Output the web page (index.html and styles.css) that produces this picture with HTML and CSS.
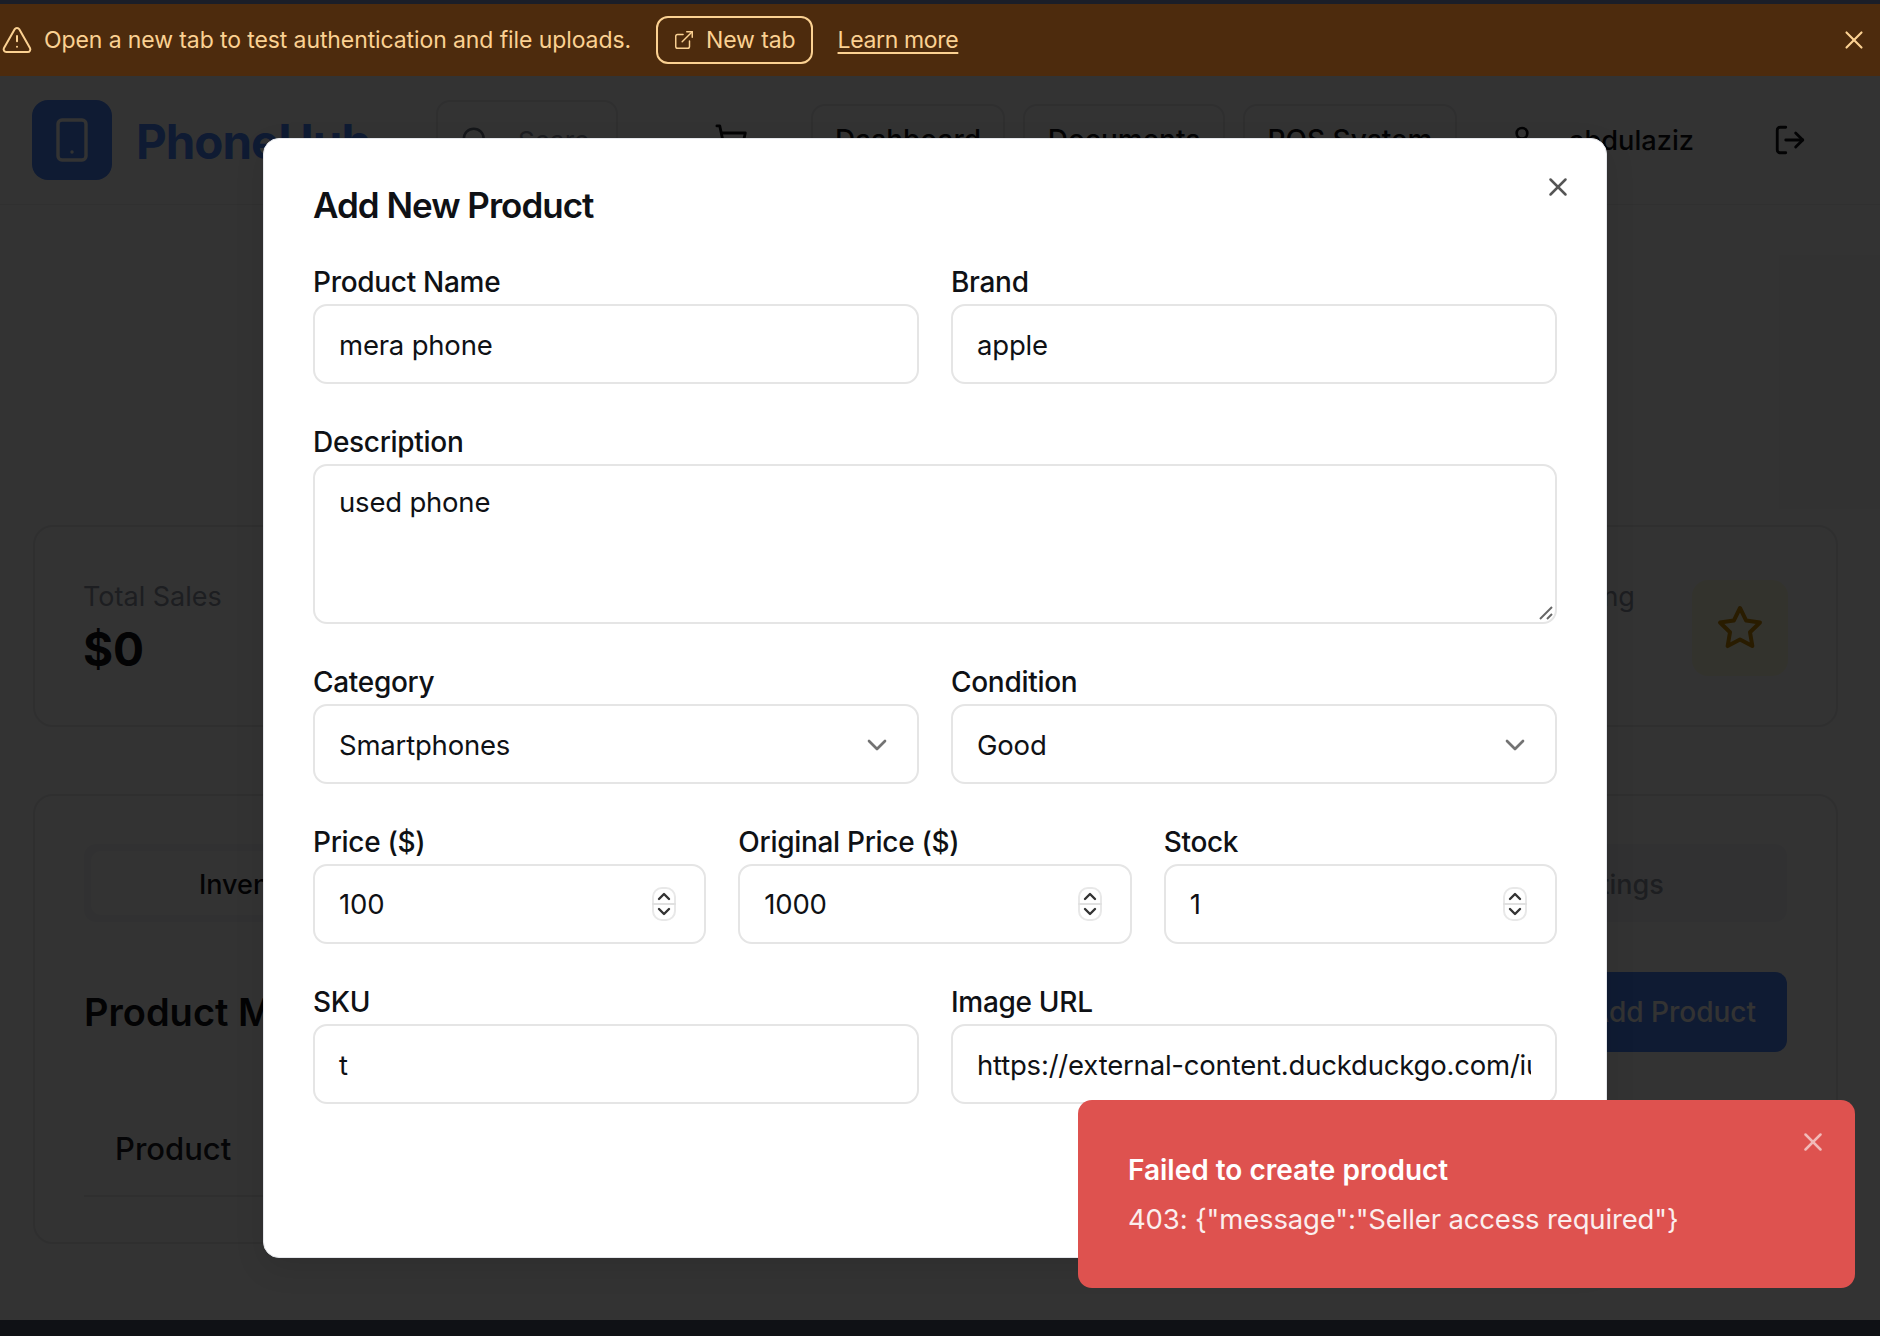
FILE: index.html
```html
<!DOCTYPE html>
<html lang="en">
<head>
    <meta charset="UTF-8">
    <meta name="viewport" content="width=device-width, initial-scale=1.0">
    <title>PhoneHub - Seller Dashboard</title>
    <link rel="stylesheet" href="styles.css">
</head>
<body>
    <div class="top-strip"></div>

    <div class="banner">
        <svg class="icon banner-warn" viewBox="0 0 24 24"><path d="m21.73 18-8-14a2 2 0 0 0-3.48 0l-8 14A2 2 0 0 0 4 21h16a2 2 0 0 0 1.73-3"/><path d="M12 9v4"/><path d="M12 17h.01"/></svg>
        <span class="banner-text">Open a new tab to test authentication and file uploads.</span>
        <a class="banner-btn">
            <svg class="icon banner-btn-icon" viewBox="0 0 24 24"><path d="M15 3h6v6"/><path d="M10 14 21 3"/><path d="M18 13v6a2 2 0 0 1-2 2H5a2 2 0 0 1-2-2V8a2 2 0 0 1 2-2h6"/></svg>
            New tab
        </a>
        <a class="banner-link">Learn more</a>
        <svg class="icon banner-close" viewBox="0 0 24 24"><path d="M18 6 6 18"/><path d="m6 6 12 12"/></svg>
    </div>

    <div class="app">
        <header class="header">
            <div class="logo">
                <svg class="icon logo-icon" viewBox="0 0 24 24"><rect width="14" height="20" x="5" y="2" rx="2"/><path d="M12 18h.01"/></svg>
            </div>
            <span class="brand">PhoneHub</span>
            <div class="search">
                <svg class="icon search-icon" viewBox="0 0 24 24"><circle cx="11" cy="11" r="8"/><path d="m21 21-4.3-4.3"/></svg>
                <span class="search-text">Search phones</span>
            </div>
            <svg class="icon cart-icon" viewBox="0 0 24 24"><circle cx="8" cy="21" r="1"/><circle cx="19" cy="21" r="1"/><path d="M2.05 2.05h2l2.66 12.42a2 2 0 0 0 2 1.58h9.78a2 2 0 0 0 1.95-1.57l1.65-7.43H5.12"/></svg>
            <nav class="nav">
                <a class="nav-btn nav-dashboard">Dashboard</a>
                <a class="nav-btn nav-documents">Documents</a>
                <a class="nav-btn nav-pos">POS System</a>
            </nav>
            <svg class="icon user-icon" viewBox="0 0 24 24"><path d="M19 21v-2a4 4 0 0 0-4-4H9a4 4 0 0 0-4 4v2"/><circle cx="12" cy="7" r="4"/></svg>
            <span class="username">abdulaziz</span>
            <svg class="icon logout-icon" viewBox="0 0 24 24"><path d="M9 21H5a2 2 0 0 1-2-2V5a2 2 0 0 1 2-2h4"/><path d="m16 17 5-5-5-5"/><path d="M21 12H9"/></svg>
        </header>

        <main class="content">
            <section class="stats">
                <div class="card stat">
                    <div>
                        <div class="stat-label">Total Sales</div>
                        <div class="stat-value">$0</div>
                    </div>
                </div>
                <div class="card stat"></div>
                <div class="card stat"></div>
                <div class="card stat">
                    <div>
                        <div class="stat-label">Sellers Rating</div>
                        <div class="stat-value">0</div>
                    </div>
                    <div class="stat-icon">
                        <svg class="icon star-icon" viewBox="0 0 24 24"><path d="M12 2l3.09 6.26L22 9.27l-5 4.87 1.18 6.88L12 17.77l-6.18 3.25L7 14.14 2 9.27l6.91-1.01L12 2z"/></svg>
                    </div>
                </div>
            </section>

            <section class="card panel">
                <div class="tabs">
                    <div class="tab tab-active">Inventory</div>
                    <div class="tab">Orders</div>
                    <div class="tab">Analytics</div>
                    <div class="tab">Reviews</div>
                    <div class="tab">Settings</div>
                </div>
                <div class="panel-head">
                    <h2>Product Management</h2>
                    <a class="primary-btn">Add Product</a>
                </div>
                <div class="table-head">Product</div>
            </section>
        </main>

        <div class="overlay">
            <div class="modal">
                <svg class="icon modal-close" viewBox="0 0 24 24"><path d="M18 6 6 18"/><path d="m6 6 12 12"/></svg>
                <h1>Add New Product</h1>
                <div class="form">
                    <div class="row row-2">
                        <div class="group">
                            <label>Product Name</label>
                            <div class="field">mera phone</div>
                        </div>
                        <div class="group">
                            <label>Brand</label>
                            <div class="field">apple</div>
                        </div>
                    </div>
                    <div class="group">
                        <label>Description</label>
                        <div class="field field-area">
                            used phone
                            <svg class="grip" viewBox="0 0 16 16"><path d="M2 14 14 2"/><path d="M9 14l5-5"/></svg>
                        </div>
                    </div>
                    <div class="row row-2">
                        <div class="group">
                            <label>Category</label>
                            <div class="field field-select">
                                Smartphones
                                <svg class="icon chevron" viewBox="0 0 24 24"><path d="m6 9 6 6 6-6"/></svg>
                            </div>
                        </div>
                        <div class="group">
                            <label>Condition</label>
                            <div class="field field-select">
                                Good
                                <svg class="icon chevron" viewBox="0 0 24 24"><path d="m6 9 6 6 6-6"/></svg>
                            </div>
                        </div>
                    </div>
                    <div class="row row-3">
                        <div class="group">
                            <label>Price ($)</label>
                            <div class="field field-number">
                                100
                                <svg class="spinner" viewBox="0 0 24 34"><rect x="1" y="1" width="22" height="32" rx="9"/><path class="spinner-line" d="M1 17h22"/><path d="m7 12 5-5 5 5"/><path d="m7 22 5 5 5-5"/></svg>
                            </div>
                        </div>
                        <div class="group">
                            <label>Original Price ($)</label>
                            <div class="field field-number">
                                1000
                                <svg class="spinner" viewBox="0 0 24 34"><rect x="1" y="1" width="22" height="32" rx="9"/><path class="spinner-line" d="M1 17h22"/><path d="m7 12 5-5 5 5"/><path d="m7 22 5 5 5-5"/></svg>
                            </div>
                        </div>
                        <div class="group">
                            <label>Stock</label>
                            <div class="field field-number">
                                1
                                <svg class="spinner" viewBox="0 0 24 34"><rect x="1" y="1" width="22" height="32" rx="9"/><path class="spinner-line" d="M1 17h22"/><path d="m7 12 5-5 5 5"/><path d="m7 22 5 5 5-5"/></svg>
                            </div>
                        </div>
                    </div>
                    <div class="row row-2">
                        <div class="group">
                            <label>SKU</label>
                            <div class="field">t</div>
                        </div>
                        <div class="group">
                            <label>Image URL</label>
                            <div class="field"><span class="field-clip">https://external-content.duckduckgo.com/iu/?u=https%3A%2F%2Ftse1.mm.bing.net</span></div>
                        </div>
                    </div>
                </div>
            </div>
        </div>

        <div class="toast">
            <svg class="icon toast-close" viewBox="0 0 24 24"><path d="M18 6 6 18"/><path d="m6 6 12 12"/></svg>
            <div class="toast-title">Failed to create product</div>
            <div class="toast-msg">403: {"message":"Seller access required"}</div>
        </div>
    </div>

    <div class="bottom-strip"></div>
</body>
</html>
```

FILE: styles.css
```css
* {
    box-sizing: border-box;
}
html, body {
    height: 100%;
}
body {
    margin: 0;
    height: 1336px;
    overflow: hidden;
    display: flex;
    flex-direction: column;
    font-family: Inter, "Liberation Sans", sans-serif;
    color: #0f1115;
    background-color: #0f1115;
}
h1, h2 {
    margin: 0;
}
.icon {
    fill: none;
    stroke: currentColor;
    stroke-width: 2;
    stroke-linecap: round;
    stroke-linejoin: round;
    flex-shrink: 0;
}

/* strips around the page */
.top-strip {
    height: 4px;
    background-color: #1b1e28;
}
.bottom-strip {
    height: 16px;
    background-color: #0f1115;
}

/* banner */
.banner {
    height: 72px;
    display: flex;
    align-items: center;
    padding: 0 11px 0 1px;
    background-color: #4d2b0d;
    color: #fbd192;
    font-size: 23px;
    letter-spacing: -0.1px;
}
.banner-warn {
    width: 32px;
    height: 32px;
    stroke-width: 1.5;
}
.banner-text {
    margin-left: 11px;
}
.banner-btn {
    display: flex;
    align-items: center;
    gap: 11px;
    height: 48px;
    margin-left: 25px;
    padding: 0 15px;
    border: 2px solid #fbd192;
    border-radius: 12px;
}
.banner-btn-icon {
    width: 22px;
    height: 22px;
    stroke-width: 1.6;
}
.banner-link {
    margin-left: 25px;
    letter-spacing: -0.35px;
    text-decoration: underline;
    text-underline-offset: 4px;
}
.banner-close {
    width: 30px;
    height: 30px;
    margin-left: auto;
    stroke-width: 1.7;
}

/* dashboard behind the dialog */
.app {
    position: relative;
    flex: 1;
    background-color: #fcfcfc;
}
.header {
    height: 129px;
    display: flex;
    align-items: center;
    padding: 0 33px 0 32px;
    border-bottom: 1px solid #eeeff1;
    background-color: #fff;
}
.logo {
    width: 80px;
    height: 80px;
    display: flex;
    align-items: center;
    justify-content: center;
    border-radius: 16px;
    background-color: #4a85ff;
    color: #fff;
}
.logo-icon {
    width: 48px;
    height: 48px;
    stroke-width: 1.7;
}
.brand {
    width: 300px;
    margin-left: 24px;
    padding-top: 3px;
    font-size: 47.5px;
    font-weight: 700;
    letter-spacing: -1px;
    color: #4a85ff;
}
.search {
    width: 182px;
    height: 80px;
    display: flex;
    align-items: center;
    gap: 28px;
    padding: 0 26px 0 22px;
    border: 2px solid #e8e9ec;
    border-radius: 14px;
    font-size: 26px;
    color: #8b93a1;
}
.search-icon {
    width: 30px;
    height: 30px;
    color: #6b7280;
}
.search-text {
    min-width: 0;
    overflow: hidden;
    white-space: nowrap;
}
.cart-icon {
    width: 34px;
    height: 34px;
    margin-left: 96px;
}
.nav {
    display: flex;
    gap: 18px;
    margin-left: 63px;
}
.nav-btn {
    height: 72px;
    display: flex;
    align-items: center;
    justify-content: center;
    border: 2px solid #e8e9ec;
    border-radius: 14px;
    font-size: 28px;
    font-weight: 500;
}
.nav-dashboard {
    width: 194px;
}
.nav-documents {
    width: 202px;
}
.nav-pos {
    width: 214px;
}
.user-icon {
    width: 32px;
    height: 32px;
    margin-left: 49px;
}
.username {
    width: 204px;
    margin-left: 31px;
    font-size: 27.2px;
    font-weight: 500;
}
.logout-icon {
    width: 34px;
    height: 34px;
}
.content {
    padding: 320px 42px 0 33px;
}
.card {
    border: 2px solid #e8e9ec;
    border-radius: 20px;
    background-color: #fff;
}
.stats {
    display: grid;
    grid-template-columns: repeat(4, 1fr);
    gap: 32px;
}
.stat {
    height: 202px;
    display: flex;
    align-items: center;
    justify-content: space-between;
    padding: 4px 48px 0;
}
.stat-label {
    font-size: 27px;
    color: #8f97a6;
}
.stat-value {
    margin-top: 8px;
    font-size: 46px;
    font-weight: 700;
}
.stat-icon {
    width: 96px;
    height: 96px;
    display: flex;
    align-items: center;
    justify-content: center;
    border-radius: 16px;
    background-color: #fefce0;
    color: #ca8a04;
}
.star-icon {
    width: 48px;
    height: 48px;
}
.panel {
    height: 450px;
    margin-top: 67px;
    padding: 48px 49px 0;
}
.tabs {
    display: grid;
    grid-template-columns: repeat(5, 1fr);
    height: 78px;
    padding: 7px;
    border-radius: 12px;
    background-color: #f5f6f8;
}
.tab {
    display: flex;
    align-items: center;
    justify-content: center;
    padding-top: 2px;
    font-size: 27px;
    font-weight: 500;
    color: #8f97a6;
}
.tab-active {
    border-radius: 10px;
    background-color: #fff;
    color: #0f1115;
}
.panel-head {
    display: flex;
    align-items: center;
    justify-content: space-between;
    margin-top: 50px;
}
.panel-head h2 {
    font-size: 38px;
    font-weight: 600;
}
.primary-btn {
    width: 330px;
    height: 80px;
    display: flex;
    align-items: center;
    justify-content: flex-end;
    padding-right: 31px;
    border-radius: 12px;
    background-color: #4a85ff;
    color: #fff;
    font-size: 28px;
    font-weight: 500;
}
.table-head {
    height: 104px;
    margin-top: 41px;
    padding: 37px 31px 0;
    border-bottom: 2px solid #e8e9ec;
    font-size: 31px;
    font-weight: 500;
    color: #1a1d24;
}

/* dialog */
.overlay {
    position: absolute;
    inset: 0;
    display: flex;
    align-items: center;
    justify-content: center;
    padding-right: 10px;
    background-color: rgba(0, 0, 0, 0.8);
}
.modal {
    position: relative;
    width: 1344px;
    height: 1120px;
    padding: 50px 49px;
    border: 1px solid #e5e7eb;
    border-radius: 16px;
    background-color: #fff;
    box-shadow: 0 10px 30px rgba(0, 0, 0, 0.1);
}
.modal h1 {
    height: 40px;
    margin-top: -4px;
    font-size: 35px;
    line-height: 40px;
    font-weight: 600;
    letter-spacing: -1px;
}
.modal-close {
    position: absolute;
    top: 33px;
    right: 33px;
    width: 30px;
    height: 30px;
    color: #555;
}
.form {
    display: flex;
    flex-direction: column;
    gap: 40px;
    margin-top: 39px;
}
.row {
    display: grid;
    gap: 32px;
}
.row-2 {
    grid-template-columns: repeat(2, 1fr);
}
.row-3 {
    grid-template-columns: repeat(3, 1fr);
}
.group {
    min-width: 0;
}
.group label {
    display: block;
    height: 36px;
    margin-bottom: 4px;
    font-size: 28px;
    line-height: 36px;
    font-weight: 500;
    letter-spacing: -0.3px;
}
.field {
    position: relative;
    height: 80px;
    display: flex;
    align-items: center;
    padding: 2px 24px 0;
    border: 2px solid #e5e5e5;
    border-radius: 14px;
    background-color: #fff;
    font-size: 27.5px;
    letter-spacing: -0.2px;
    white-space: nowrap;
}
.field-clip {
    display: block;
    min-width: 0;
    overflow: hidden;
}
.field-area {
    height: 160px;
    align-items: flex-start;
    padding-top: 19px;
}
.grip {
    position: absolute;
    right: 1px;
    bottom: 1px;
    width: 16px;
    height: 16px;
    fill: none;
    stroke: #666;
    stroke-width: 2;
}
.field-select {
    justify-content: space-between;
    padding-right: 24px;
}
.chevron {
    width: 32px;
    height: 32px;
    color: #737373;
}
.field-number {
    justify-content: space-between;
    padding-top: 0;
    padding-right: 28px;
}
.spinner {
    width: 24px;
    height: 34px;
    fill: none;
    stroke: #333;
    stroke-width: 2.4;
    stroke-linecap: round;
    stroke-linejoin: round;
}
.spinner rect {
    stroke: #e8e8e8;
    stroke-width: 2;
}
.spinner .spinner-line {
    stroke: #e0e0e0;
    stroke-width: 2;
}

/* toast */
.toast {
    position: absolute;
    right: 25px;
    bottom: 32px;
    width: 777px;
    height: 188px;
    padding: 52px 50px 0;
    border-radius: 14px;
    background-color: #de524f;
    color: #fff;
    font-size: 28px;
}
.toast-title {
    height: 36px;
    line-height: 36px;
    font-weight: 600;
}
.toast-msg {
    margin-top: 13px;
    line-height: 36px;
    font-size: 27.5px;
    letter-spacing: -0.15px;
    opacity: 0.9;
}
.toast-close {
    position: absolute;
    top: 27px;
    right: 27px;
    width: 30px;
    height: 30px;
    opacity: 0.6;
}
```
